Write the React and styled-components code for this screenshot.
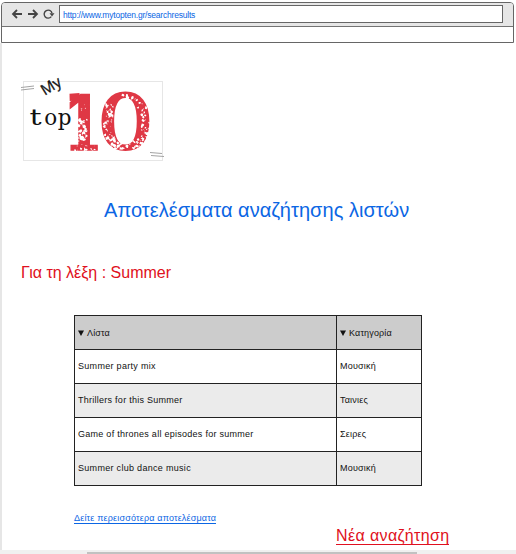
import React from 'react';
import styled, { createGlobalStyle } from 'styled-components';

const Global = createGlobalStyle`
  * { box-sizing: border-box; }
  body { margin: 0; background: #fff; font-family: "Liberation Sans", Arial, sans-serif; overflow: hidden; }
`;

const Page = styled.div`
  display: flex;
  flex-direction: column;
  width: 516px;
  height: 554px;
  background: #fff;
  overflow: hidden;
`;

const Chrome = styled.header`
  flex: none;
  width: 513px;
  height: 41px;
  margin: 2px 0 0 1px;
  border: 1px solid #666;
  border-radius: 4px 4px 0 0;
`;

const Toolbar = styled.div`
  display: flex;
  height: 24px;
  padding: 2px 10px 0 9px;
  background: #e6e6e6;
  border-bottom: 1px solid #737373;
  border-radius: 3px 3px 0 0;
`;

const NavIcons = styled.svg`
  flex: none;
  width: 48px;
  height: 18px;
`;

const Address = styled.div`
  flex: 1;
  height: 18px;
  padding-left: 3px;
  border: 1px solid #666;
  background: #fff;
  color: #0b66e4;
  font-size: 8.5px;
  line-height: 18px;
  letter-spacing: ${(p) => p.$tracking}px;
  white-space: nowrap;
`;

const Content = styled.main`
  flex: 1;
  min-height: 0;
  display: flex;
  flex-direction: column;
  align-items: flex-start;
  border-left: 2px solid #e6e6e6;
  padding: 32px 0 0 18px;
`;

const Logo = styled.svg`
  flex: none;
  width: 146px;
  height: 90px;
  overflow: visible;
`;

const Line = styled.div`
  flex: none;
  white-space: nowrap;
  color: ${(p) => p.$color};
  font-size: ${(p) => p.$size}px;
  line-height: ${(p) => p.$height}px;
  letter-spacing: ${(p) => p.$tracking || 0}px;
  margin: ${(p) => p.$margin};
`;

const Link = styled(Line).attrs({ as: 'a' })`
  border-bottom: 1px solid ${(p) => p.$color};
`;

const Results = styled.div`
  flex: none;
  display: grid;
  grid-template-columns: 261px 84px;
  grid-template-rows: repeat(5, 33px);
  gap: 1px;
  padding: 1px;
  margin: 32px 0 0 54px;
  background: #222;
`;

const Cell = styled.div`
  display: flex;
  align-items: center;
  gap: 3px;
  padding: 0 0 ${(p) => (p.$head ? 0 : 2)}px 3px;
  background: ${(p) => p.$bg};
  color: #111;
  font-size: 9px;
  letter-spacing: ${(p) => p.$tracking}px;
  white-space: nowrap;
`;

const SortMark = styled.svg`
  width: 6px;
  height: 6px;
`;

const Scroll = styled.div`
  flex: none;
  height: 4px;
  padding: 2px 99px 0 87px;
  background: #f0f0f0;
`;

const Thumb = styled.div`
  height: 2px;
  background: #c1c1c1;
`;

const rows = [
  ['Summer party mix', 'Μουσική', 0.3],
  ['Thrillers for this Summer', 'Ταινιες', 0.26],
  ['Game of thrones all episodes for summer', 'Σειρες', 0.27],
  ['Summer club dance music', 'Μουσική', 0.3],
];

/* Worn ink patches: x, y, width, height, number of chips, chip size */
const patches = [
  [59, 26, 8, 20, 6, 0.9],
  [57, 44, 9, 23, 50, 2.1],
  [53, 67, 21, 9, 18, 1.4],
  [83, 28, 9, 24, 34, 1.8],
  [102, 19, 12, 6, 7, 2.4],
  [115, 22, 12, 12, 8, 1.5],
  [120, 34, 9, 30, 30, 1.8],
  [84, 54, 10, 12, 14, 2.2],
  [89, 63, 34, 11, 55, 2.3],
];

function makeChips() {
  let seed = 37;
  const rnd = () => {
    seed = (seed * 16807) % 2147483647;
    return seed / 2147483647;
  };
  return patches
    .flatMap(([x, y, w, h, n, s]) =>
      Array.from({ length: n }, () => {
        const cx = x + rnd() * w;
        const cy = y + rnd() * h;
        const r = s * (0.25 + rnd() * 0.75);
        const pts = Array.from({ length: 6 }, (_, i) => {
          const a = (i * Math.PI) / 3;
          const d = r * (0.4 + rnd() * 0.8);
          return `${(cx + Math.cos(a) * d).toFixed(1)} ${(cy + Math.sin(a) * d).toFixed(1)}`;
        });
        return `M${pts.join('L')}Z`;
      })
    )
    .join('');
}

const chips = makeChips();

function TopTenLogo() {
  return (
    <Logo viewBox="-1 0 146 90">
      <rect x="2.5" y="6.5" width="139" height="79" fill="#fff" stroke="#e6e6e6" />
      <path d="M0 13l13-1.500M0 15.500l13-1.500M129 78l12 1M130 81l13 1" transform="translate(0 -.5)" stroke="#999" strokeWidth="0.9" fill="none" />
      <text transform="translate(23.800 20.800) rotate(-32)" fontFamily="Open Sans, sans-serif" fontSize="15" fill="#111" stroke="#111" strokeWidth="0.3">My</text>
      <g fontFamily="DejaVu Serif, serif" fontSize="21.500" fill="#111">
        <text transform="translate(8.500 50) scale(1.4 1)">t</text>
        <text x="23.300" y="50">o</text>
        <text x="36.800" y="50">p</text>
      </g>
      <g fontFamily="DejaVu Serif, serif" fill="#df3845" stroke="#df3845">
        <text transform="translate(42.200 74.500) scale(0.76 1)" fontSize="75" fontWeight="bold" strokeWidth="1.5">1</text>
        <text transform="translate(76.500 73.500) scale(1.18 1)" fontSize="74.500" strokeWidth="3">0</text>
      </g>
      <path d="M48.500 18.700l10-.8v7.500l-9.800.6z" fill="#df3845" />
      <path d={chips} fill="#fff" />
    </Logo>
  );
}

function Sort() {
  return (
    <SortMark viewBox="0 0 6 6">
      <path d="M0 .5h6L3 6z" fill="#111" />
    </SortMark>
  );
}

export default function App() {
  return (
    <Page>
      <Global />
      <Chrome>
        <Toolbar>
          <NavIcons viewBox="0 0 48 18" fill="none" stroke="#444" strokeWidth="1.8">
            <path d="M2 9h9M6 5L2 9l4 4M17 9h9M22 5l4 4-4 4" />
            <path d="M40.300 11.600A4 4 0 1 1 41 8" strokeWidth="1.400" />
            <path d="M38.500 8.200h5l-2.500 3.200z" fill="#444" stroke="none" />
          </NavIcons>
          <Address $tracking={-0.2}>http://www.mytopten.gr/searchresults</Address>
        </Toolbar>
      </Chrome>
      <Content>
        <TopTenLogo />
        <Line $color="#0b66e4" $size={20} $height={24} $tracking={0.04} $margin="33px 0 0 84px">Αποτελέσματα αναζήτησης λιστών</Line>
        <Line $color="#e01020" $size={16} $height={20} $margin="41px 0 0 1px">Για τη λέξη : Summer</Line>
        <Results>
          <Cell $head $bg="#ccc" $tracking={0.15}><Sort />Λίστα</Cell>
          <Cell $head $bg="#ccc" $tracking={0.15}><Sort />Κατηγορία</Cell>
          {rows.map(([title, category, tracking], i) => (
            <React.Fragment key={title}>
              <Cell $bg={i % 2 ? '#ebebeb' : '#fff'} $tracking={tracking}>{title}</Cell>
              <Cell $bg={i % 2 ? '#ebebeb' : '#fff'} $tracking={0.2}>{category}</Cell>
            </React.Fragment>
          ))}
        </Results>
        <Link $color="#0b66e4" $size={9} $height={10} $tracking={0.18} $margin="27px 0 0 54px">Δείτε περεισσότερα αποτελέσματα</Link>
        <Link $color="#e01020" $size={16} $height={17} $tracking={0.38} $margin="3px 0 0 316px">Νέα αναζήτηση</Link>
      </Content>
      <Scroll><Thumb /></Scroll>
    </Page>
  );
}
